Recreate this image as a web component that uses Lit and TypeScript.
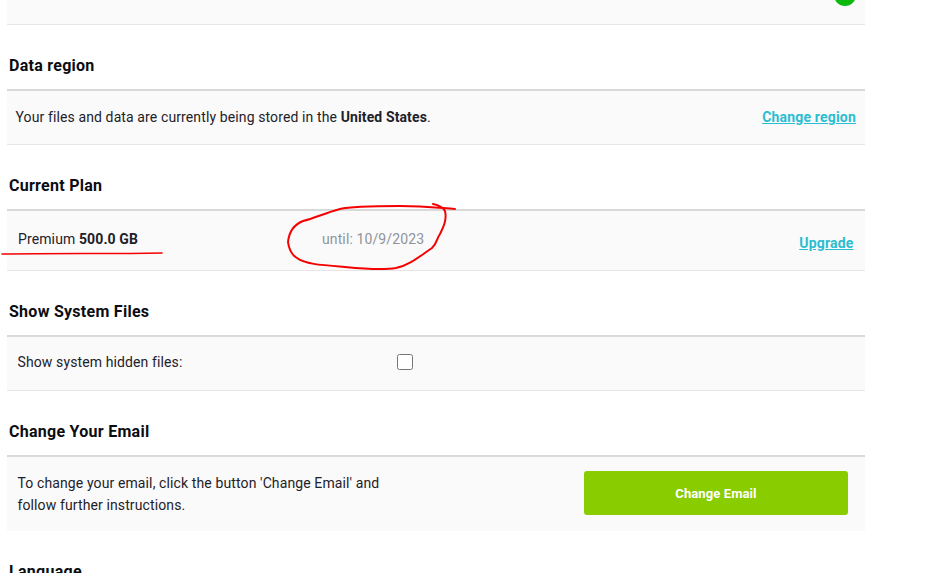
import { LitElement, html, css } from "lit";
import { customElement } from "lit/decorators.js";

@customElement("app-root")
export class AppRoot extends LitElement {
  static styles = css`
    :host { display: block; position: relative; width: 926px; height: 573px; overflow: hidden; background: #fff;
      font-family: Roboto, "Liberation Sans", sans-serif; font-size: 14px; letter-spacing: 0.115px; color: #1d2129; }
    .wrap { width: 858px; margin-left: 7px; }
    .panel { background: #fafafa; display: flex; box-sizing: border-box; }
    .ruled { border-bottom: 1px solid #e6e6e6; }
    .top { height: 25px; position: relative; }
    .dot { position: absolute; right: 9px; top: -16px; width: 22px; height: 22px; border-radius: 50%; background: #0db80d; }
    h2 { margin: 0; height: 64px; box-sizing: border-box; padding: 31px 0 0 2px; font-size: 16px; line-height: 19px; font-weight: 700; letter-spacing: 0.27px; color: #0b0d12; }
    .body { border-top: 2px solid #d9d9d9; }
    .region { height: 56px; align-items: center; justify-content: space-between; padding: 0 9px 2px 8.5px; }
    .plan { height: 62px; padding: 0 11.5px 0 11px; }
    .plan .name { width: 304px; padding-top: 20px; line-height: 16px; }
    .plan .until { flex: 1; padding-top: 20px; line-height: 16px; color: #8f949b; }
    .plan a { padding-top: 24px; line-height: 16px; }
    .sys { height: 56px; align-items: center; padding: 0 0 3px 10.5px; }
    .sys span { width: 379.5px; }
    input { width: 16px; height: 16px; margin: 0; }
    .email { height: 76px; padding: 14px 17px 0 10.5px; justify-content: space-between; align-items: flex-start; }
    .email p { margin: 1px 0 0; width: 380px; line-height: 22px; }
    button { width: 264px; height: 44px; border: 0; border-radius: 3px; background: #89cc00; color: #fff; font: 700 13px Roboto, sans-serif; letter-spacing: 0.1px; }
    a { color: #2bbdd1; font-weight: 700; letter-spacing: 0.19px; text-decoration: underline; }
    b { font-weight: 700; }
    svg { position: absolute; left: 0; top: 0; pointer-events: none; }
  `;

  render() {
    return html`
      <div class="wrap">
        <div class="panel ruled top"><i class="dot"></i></div>
        <h2>Data region</h2>
        <div class="panel ruled body region">
          <span>Your files and data are currently being stored in the <b>United States</b>.</span>
          <a href="#">Change region</a>
        </div>
        <h2>Current Plan</h2>
        <div class="panel ruled body plan">
          <span class="name">Premium <b>500.0 GB</b></span>
          <span class="until">until: 10/9/2023</span>
          <a href="#">Upgrade</a>
        </div>
        <h2>Show System Files</h2>
        <div class="panel ruled body sys">
          <span>Show system hidden files:</span>
          <input type="checkbox" />
        </div>
        <h2>Change Your Email</h2>
        <div class="panel body email">
          <p>To change your email, click the button 'Change Email' and follow further instructions.</p>
          <button>Change Email</button>
        </div>
        <h2>Language</h2>
      </div>
      <svg width="926" height="573" fill="none" stroke="#f50000" stroke-width="2" stroke-linecap="round" stroke-linejoin="round">
        <path stroke-width="1.6" d="M2 254 C60 253 110 254 162 253" />
        <path d="M455 209 C440 208 425 206 400 206 C375 206 352 206 340 209 C325 213 315 218 303 221 C293 225 289 232 288 242 C289 250 292 255 297 258 C305 264 320 265 345 267 C365 269 385 270 396 268 C410 265 420 256 432 248 C437 243 437 238 440 234 C444 226 447 219 445 211 C443 207 438 205 433 204" />
      </svg>
    `;
  }
}
